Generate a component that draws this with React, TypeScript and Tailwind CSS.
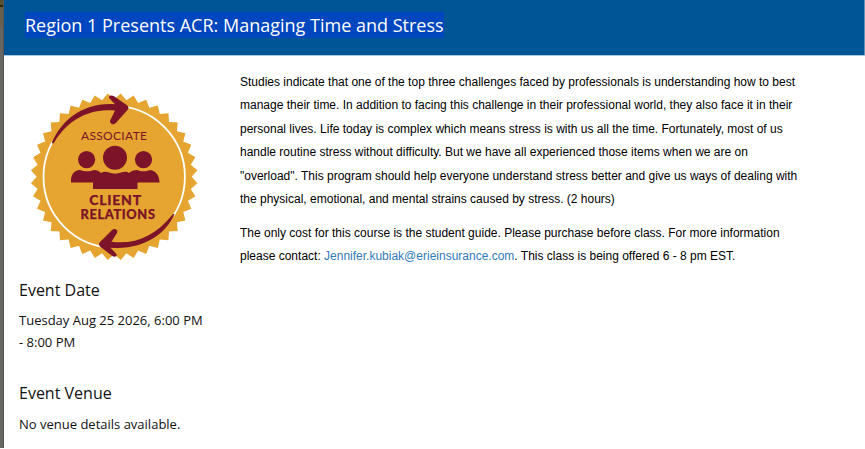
import { Fragment } from "react";

const TEETH = 40;

// zigzag outline of the seal
const sealPoints = Array.from({ length: TEETH * 2 }, (_, i) => {
  const angle = ((i + 1) / TEETH) * Math.PI - Math.PI / 2;
  const radius = i % 2 === 0 ? 83.5 : 77.5;
  return `${(114.2 + radius * Math.cos(angle)).toFixed(2)},${(176.8 + radius * Math.sin(angle)).toFixed(2)}`;
}).join(" ");

const description = [
  "Studies indicate that one of the top three challenges faced by professionals is understanding how to best",
  "manage their time. In addition to facing this challenge in their professional world, they also face it in their",
  "personal lives. Life today is complex which means stress is with us all the time. Fortunately, most of us",
  "handle routine stress without difficulty. But we have all experienced those items when we are on",
  "\"overload\". This program should help everyone understand stress better and give us ways of dealing with",
  "the physical, emotional, and mental strains caused by stress. (2 hours)",
];

function Badge() {
  return (
    <svg width="168" height="168" viewBox="30 93 168 168" className="block">
      <polygon points={sealPoints} fill="#e5a530" />
      <circle cx="114.2" cy="176.8" r="70.7" fill="none" stroke="#fff" strokeWidth="1.8" />
      {/* Hide the ring below the arrows */}
      <path d="M52.5 142.3A70.7 70.7 0 0 1 127 107.3" fill="none" stroke="#e5a530" strokeWidth="4" />
      <path d="M173 215.8A70.7 70.7 0 0 1 101 246.3" fill="none" stroke="#e5a530" strokeWidth="4" />
      <g fill="#7c1328">
        <path d="M52 142.8C61 120 84 102 115 104.2L109.6 98.6C107.6 96.2 110.8 94.3 114 96.2L127 105.2C128.8 106.5 128.9 108.2 127.5 110L115.8 123C113.4 125.6 109 123.6 110.3 120.2L115 110.6C91 108.6 69 118 54.3 142.2C53.5 143.6 52 144 52 142.8Z" />
        <path d="M174.2 214.6C166 234 143 250.5 110.5 247.7L116 253.6C118.3 256.5 114.5 257.5 112 255.8L100 246.5C98.8 245.2 98.8 243.4 100 242L112 230C115 227.5 118.6 230 117 233L111.5 241.8C136 244.8 155 235.5 171.8 215.4C172.8 214.3 174.8 213.6 174.2 214.6Z" />
        <circle cx="115" cy="157.7" r="12" />
        <circle cx="86.6" cy="159.6" r="8.6" />
        <circle cx="143.5" cy="159.6" r="8.6" />
        <path d="M71 182.4C70.5 175 74 170 80 170C84 171.8 90 171.8 94 170C97 170 99 171 101 173C104 171 107 171.5 109 172.5C113 174 117 174 121 172.5C124 171.5 127 171 129 173C131 171 134 170 137 170C141 171.8 146 171.8 150 170C156 170.5 159.5 176 159.5 182.4H137.5V189H93V182.4Z" />
        <text x="114" y="139.8" textAnchor="middle" fontSize="12" textLength="66" className="font-['Lato',sans-serif]">ASSOCIATE</text>
        <g stroke="#7c1328" strokeWidth="0.25">
          <text x="115.2" y="204.7" textAnchor="middle" fontSize="14" textLength="52" className="font-['Lato',sans-serif] font-black">CLIENT</text>
          <text x="117.7" y="218.9" textAnchor="middle" fontSize="12.8" textLength="74.5" className="font-['Lato',sans-serif] font-black">RELATIONS</text>
        </g>
      </g>
    </svg>
  );
}

export default function App() {
  return (
    <div className="flex h-[449px] w-[865px] overflow-hidden bg-white font-['Open_Sans',sans-serif] text-[#111]">
      {/* Dimmed page behind the dialog */}
      <div className="flex h-[448px] w-1 shrink-0 flex-col border-r border-[#555451] bg-[#686663]">
        <div className="h-[5px] bg-[#5a512f]" />
        <div className="h-0.5 bg-[#302505]" />
        <div className="h-5 bg-[#695f4b]" />
      </div>
      <div className="flex-1">
        <header className="flex h-[55px] items-start border-r border-[#5f93bb] bg-[#005596] pl-[21px] pt-3">
          <h1 className="h-[26px] whitespace-nowrap bg-[#0046be] text-[18px] leading-[26px] text-white">
            Region 1 Presents ACR: Managing Time and Stress
          </h1>
        </header>
        <div className="h-px bg-[#a9c9df]" />
        <main className="flex">
          <aside className="w-[236px] shrink-0 pl-[15px]">
            <div className="pl-[11px] pt-[37px]">
              <Badge />
            </div>
            <h2 className="mt-[17px] text-[16px] leading-6">Event Date</h2>
            <p className="mt-[7px] text-[13px] leading-[22px]">
              Tuesday Aug 25 2026, 6:00 PM
              <br />- 8:00 PM
            </p>
            <h2 className="mt-[28px] text-[16px] leading-6">Event Venue</h2>
            <p className="mt-2 text-[13px] leading-[22px]">No venue details available.</p>
          </aside>
          <section className="whitespace-nowrap pt-[15px] font-['Liberation_Sans',Arial,sans-serif] text-[12px] leading-[23.4px] text-black">
            <p>
              {description.map((line) => (
                <Fragment key={line}>
                  {line}
                  <br />
                </Fragment>
              ))}
            </p>
            <p className="mt-[10.5px]">
              The only cost for this course is the student guide. Please purchase before class. For more information
              <br />
              please contact: <a className="text-[#337ab7]">Jennifer.kubiak@erieinsurance.com</a>. This class is being
              offered 6 - 8 pm EST.
            </p>
          </section>
        </main>
      </div>
    </div>
  );
}
